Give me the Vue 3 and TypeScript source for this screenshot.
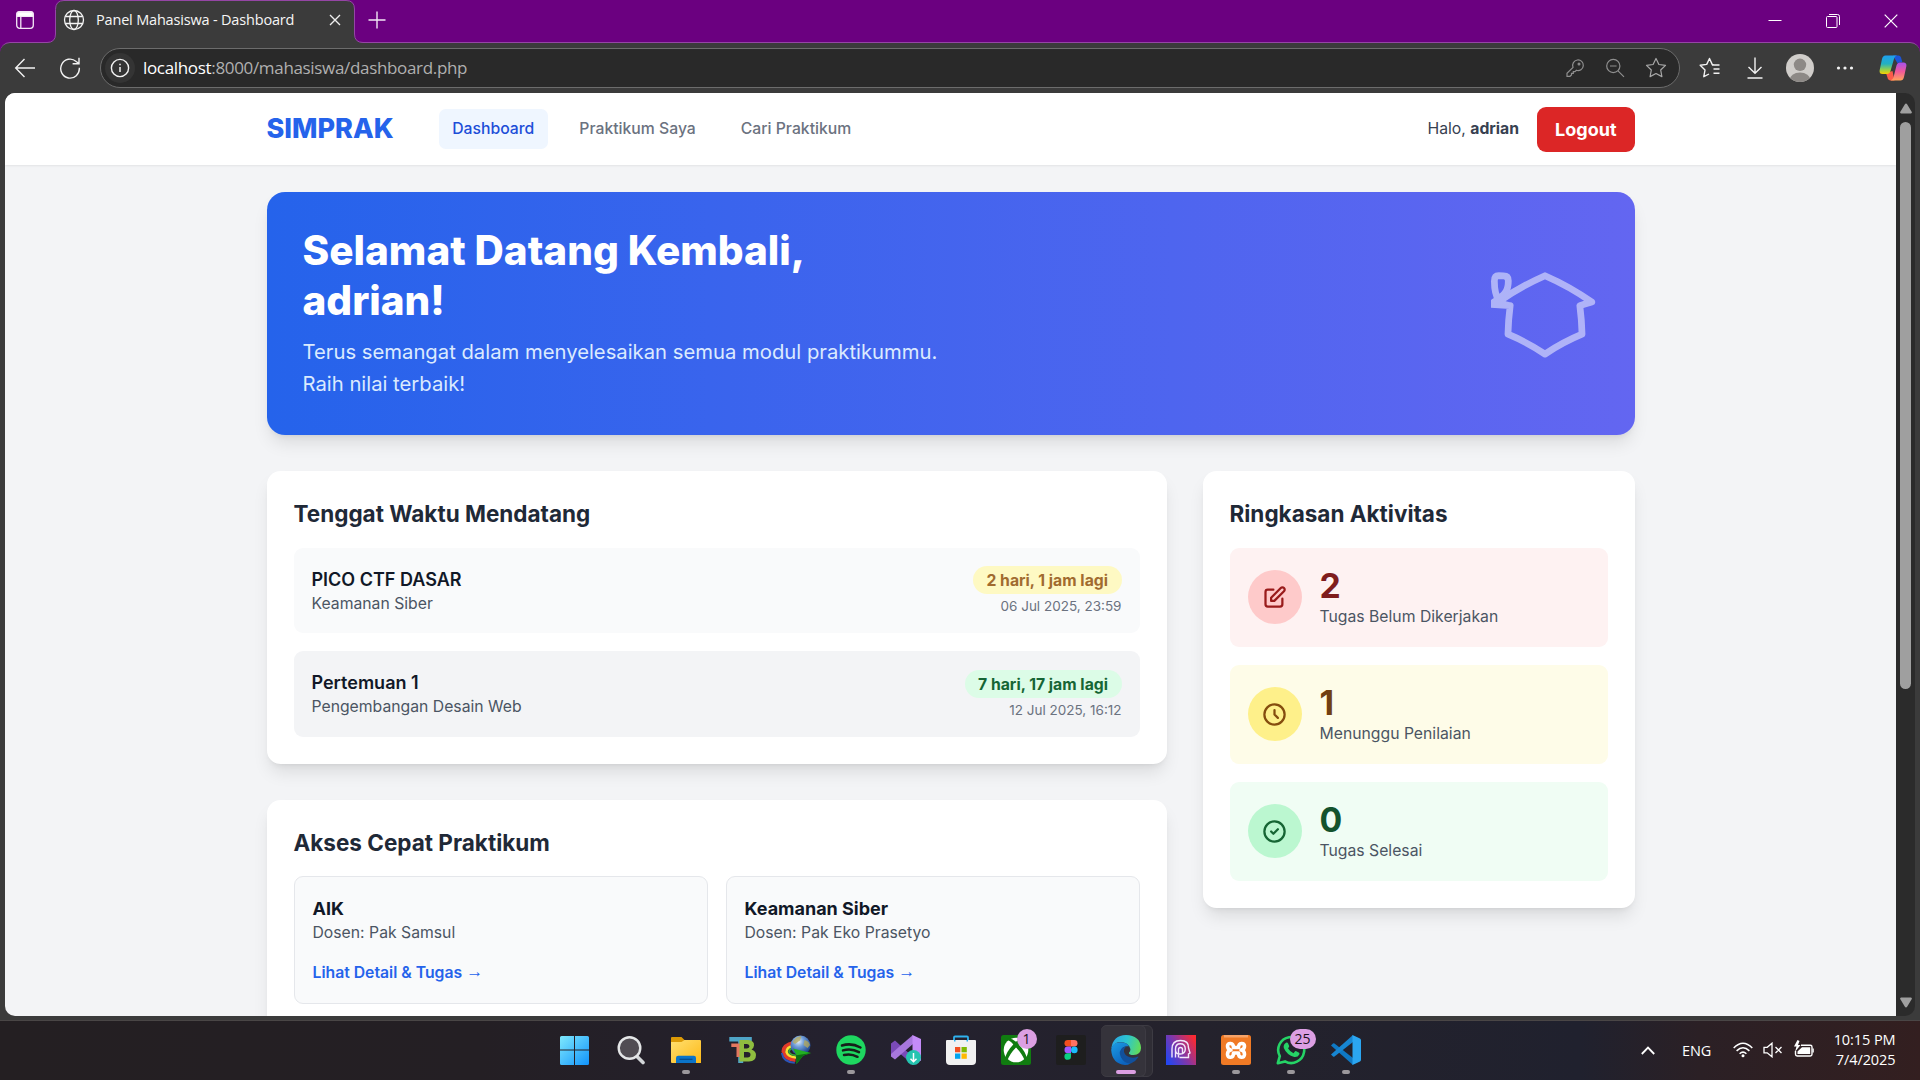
<script setup lang="ts">
interface Deadline {
  title: string
  course: string
  left: string
  due: string
  tone: 'soon' | 'later'
}
interface Stat {
  count: number
  label: string
  tone: 'red' | 'yellow' | 'green'
  path: string
}
interface Course {
  name: string
  lecturer: string
}

const navLinks: string[] = ['Dashboard', 'Praktikum Saya', 'Cari Praktikum']

const deadlines: Deadline[] = [
  { title: 'PICO CTF DASAR', course: 'Keamanan Siber', left: '2 hari, 1 jam lagi', due: '06 Jul 2025, 23:59', tone: 'soon' },
  { title: 'Pertemuan 1', course: 'Pengembangan Desain Web', left: '7 hari, 17 jam lagi', due: '12 Jul 2025, 16:12', tone: 'later' },
]

const courses: Course[] = [
  { name: 'AIK', lecturer: 'Pak Samsul' },
  { name: 'Keamanan Siber', lecturer: 'Pak Eko Prasetyo' },
]

const stats: Stat[] = [
  {
    count: 2,
    label: 'Tugas Belum Dikerjakan',
    tone: 'red',
    path: 'M11 5H6a2 2 0 00-2 2v11a2 2 0 002 2h11a2 2 0 002-2v-5m-1.414-9.414a2 2 0 112.828 2.828L11.828 15H9v-2.828l8.586-8.586z',
  },
  { count: 1, label: 'Menunggu Penilaian', tone: 'yellow', path: 'M12 8v4l3 3m6-3a9 9 0 11-18 0 9 9 0 0118 0z' },
  { count: 0, label: 'Tugas Selesai', tone: 'green', path: 'M9 12l2 2 4-4m6 2a9 9 0 11-18 0 9 9 0 0118 0z' },
]
</script>

<template>
  <div class="desktop">
    <div class="browser">
      <div class="tabstrip">
        <div class="tab-actions">
          <svg width="20" height="20" viewBox="0 0 20 20" fill="none" stroke="#f3e6f5" stroke-width="1.3">
            <rect x="1.7" y="1.7" width="16.6" height="16.6" rx="3" />
            <path d="M2 3.5Q2 2 4 2h12q2 0 2 1.500V6.300H2z" fill="#fff" />
            <path d="M5.800 6v12" />
          </svg>
        </div>
        <div class="tab">
          <svg class="tab-shape" width="318" height="44" viewBox="0 0 318 44">
            <path d="M0 42.500H1Q9.500 42.500 9.500 34V9.500Q9.500 .5 18 .5H300Q308.500 .5 308.500 9V34Q308.500 42.500 317 42.500H318V44H0Z" fill="#3b3b3b" />
            <path d="M0 42.500H1Q9.500 42.500 9.500 34V9.500Q9.500 .5 18 .5H300Q308.500 .5 308.500 9V34Q308.500 42.500 317 42.500H318" fill="none" stroke="#9546a5" />
          </svg>
          <svg class="globe" width="22" height="22" viewBox="0 0 22 22" fill="none" stroke="#f4f4f4" stroke-width="1.3">
            <circle cx="11" cy="11" r="9.500" />
            <ellipse cx="11" cy="11" rx="4.300" ry="9.500" />
            <path d="M2.300 7.500h17.400M2.300 14.500h17.400" />
          </svg>
          <span class="tab-title">Panel Mahasiswa - Dashboard</span>
          <svg class="tab-close" width="12" height="12" viewBox="0 0 12 12" stroke="#eee" stroke-width="1.4">
            <path d="M1 1l10 10M11 1L1 11" />
          </svg>
        </div>
        <svg class="plus" width="18" height="18" viewBox="0 0 18 18" stroke="#f3e6f5" stroke-width="1.4">
          <path d="M9 .5v17M.5 9h17" />
        </svg>
        <div class="window-buttons">
          <svg width="14" height="14" viewBox="0 0 14 14" stroke="#fff" fill="none"><path d="M.5 6.500h13" /></svg>
          <svg width="14" height="14" viewBox="0 0 14 14" stroke="#fff" fill="none">
            <rect x=".5" y="2.500" width="10.500" height="11" rx="1" />
            <path d="M3 .5h8.500q2 0 2 2V11" />
          </svg>
          <svg width="14" height="14" viewBox="0 0 14 14" stroke="#fff" fill="none" stroke-width="1.2"><path d="M.7 .7l12.600 12.600M13.300 .7L.7 13.300" /></svg>
        </div>
      </div>

      <div class="toolbar">
        <svg class="back" width="22" height="22" viewBox="0 0 22 22" fill="none" stroke="#f2f2f2" stroke-width="1.4">
          <path d="M21 11H2M10.500 2L1.700 11l8.800 9" />
        </svg>
        <svg class="reload" width="22" height="22" viewBox="0 0 22 22" fill="none" stroke="#f2f2f2" stroke-width="1.4">
          <path d="M20.300 10.800A9.300 9.500 0 1 1 17.200 4.500L19.800 6.500M20 .8v5.900h-6.400" />
        </svg>
        <div class="address">
          <span class="site-info">
            <svg width="20" height="20" viewBox="0 0 20 20" fill="none" stroke="#f2f2f2" stroke-width="1.4">
              <circle cx="10" cy="10" r="8.600" />
              <path d="M10 9v5M10 5.700v1.600" stroke-width="1.500" />
            </svg>
          </span>
          <span class="url"><b>localhost</b>:8000/mahasiswa/dashboard.php</span>
          <span class="address-icons">
            <svg width="20" height="20" viewBox="0 0 20 20" fill="none" stroke="#8f8f8f" stroke-width="1.200">
              <path d="M12.300 2a5.300 5.300 0 1 1-.9 10.300L10 13.600H8.300v1.700H6.500V17L5 18.300H2v-3l6-6A5.400 5.400 0 0 1 12.300 2z" />
              <circle cx="14" cy="6" r=".9" />
            </svg>
            <svg width="20" height="20" viewBox="0 0 20 20" fill="none" stroke="#8f8f8f" stroke-width="1.200">
              <circle cx="8.300" cy="8" r="6.600" />
              <path d="M13 12.800l6 6M5 8h6.600" />
            </svg>
            <svg width="22" height="22" viewBox="0 0 22 22" fill="none" stroke="#a8a8a8" stroke-width="1.200" stroke-linejoin="round">
              <path d="M11 1.500l2.900 6 6.600.9-4.800 4.600 1.200 6.600-5.900-3.100-5.900 3.100L6.300 13 1.500 8.400l6.600-.9z" />
            </svg>
          </span>
        </div>
        <div class="toolbar-right">
          <svg width="22" height="22" viewBox="0 0 22 22" fill="none" stroke="#f2f2f2" stroke-width="1.400" stroke-linejoin="round">
            <path d="M14.500 7.800l-1.200-.2L10.500 1.500 7.700 7.400 1.200 8.300 6 13l-1.200 6.700 5.200-2.700M13 8h7.500M14.500 12h6M14.500 16.200h6" />
          </svg>
          <svg width="22" height="22" viewBox="0 0 22 22" fill="none" stroke="#f2f2f2" stroke-width="1.400">
            <path d="M11 .5v15.500M4.500 10l6.500 6.300 6.500-6.300M3.500 21h15" />
          </svg>
          <svg width="28" height="28" viewBox="0 0 28 28">
            <defs><clipPath id="avatar"><circle cx="14" cy="14" r="14" /></clipPath></defs>
            <g clip-path="url(#avatar)">
              <rect width="28" height="28" fill="#d0cdca" />
              <circle cx="14" cy="10.800" r="6.200" fill="#8d8986" />
              <ellipse cx="14" cy="26.500" rx="10.500" ry="8" fill="#8d8986" />
            </g>
          </svg>
          <svg width="18" height="6" viewBox="0 0 18 6" fill="#f2f2f2"><circle cx="2.500" cy="3" r="1.600" /><circle cx="9" cy="3" r="1.600" /><circle cx="15.500" cy="3" r="1.600" /></svg>
          <svg width="28" height="28" viewBox="0 0 28 28">
            <defs>
              <linearGradient id="cpA" x1="0" y1="0" x2="0" y2="1"><stop offset="0" stop-color="#1ea0f0" /><stop offset=".45" stop-color="#23b0c0" /><stop offset=".75" stop-color="#8fcf50" /><stop offset="1" stop-color="#f7d000" /></linearGradient>
              <linearGradient id="cpB" x1="0" y1="0" x2="0" y2="1"><stop offset="0" stop-color="#a651ee" /><stop offset=".5" stop-color="#f0589a" /><stop offset="1" stop-color="#ffa35a" /></linearGradient>
            </defs>
            <path d="M14 1.500h5.500q1.800 0 2.500 2l1.300 4.500-5 1z" fill="#1c55d8" />
            <path d="M7 19l6.500-2 2 9.500h-4q-2 0-2.700-2z" fill="#fb5b4a" />
            <path d="M6.500 1.500h11.500q-2.300.5-3 3.200L11.500 17q-.9 3-3.500 3H3.500Q.2 20 .6 16.500L3 5q.8-3.500 3.500-3.500z" fill="url(#cpA)" />
            <path d="M21.500 26.500H11.500q2.300-.5 3-3.200L17.500 11.500Q18.400 8.500 21 8.500h3.500q3.300 0 2.900 3.500L25 23q-.8 3.500-3.500 3.500z" fill="url(#cpB)" />
          </svg>
        </div>
      </div>

      <div class="content">
        <div class="page">
          <header class="site-header">
            <div class="container nav">
              <span class="brand">SIMPRAK</span>
              <nav class="links">
                <a v-for="(link, i) in navLinks" :key="link" class="link" :class="{ active: i === 0 }">{{ link }}</a>
              </nav>
              <span class="hello">Halo, <strong>adrian</strong></span>
              <a class="logout">Logout</a>
            </div>
          </header>

          <main class="container main">
            <section class="hero">
              <div class="hero-text">
                <h1>Selamat Datang Kembali,<br />adrian!</h1>
                <p>Terus semangat dalam menyelesaikan semua modul praktikummu.<br />Raih nilai terbaik!</p>
              </div>
              <svg class="hero-icon" viewBox="0 0 24 24" fill="none" stroke="#fff" stroke-width="1.5" stroke-linecap="round" stroke-linejoin="round">
                <path d="M-.5 9.850L4.260 10.147a60.440 60.440 0 0 0-.491 6.347A48.620 48.620 0 0 1 12 20.904a48.620 48.620 0 0 1 8.232-4.410 60.460 60.460 0 0 0-.491-6.347c.875-.294 1.762-.566 2.658-.814A59.900 59.900 0 0 0 12 3.493 59.900 59.900 0 0 0 1.800 9.200C.9 7.700.75 6 .75 4.700.75 3.800 1.100 3.500 1.700 3.500H2.800C3.500 3.500 3.850 3.900 3.850 4.600 3.850 6.500 3.500 7.500 .7 9.300L4.260 10.147" />
              </svg>
            </section>

            <div class="grid">
              <div class="column">
                <section class="card">
                  <h3>Tenggat Waktu Mendatang</h3>
                  <div class="stack">
                    <div v-for="d in deadlines" :key="d.title" class="deadline" :class="d.tone">
                      <div>
                        <p class="item-title">{{ d.title }}</p>
                        <p class="item-sub">{{ d.course }}</p>
                      </div>
                      <div class="when">
                        <span class="badge">{{ d.left }}</span>
                        <p class="due">{{ d.due }}</p>
                      </div>
                    </div>
                  </div>
                </section>

                <section class="card">
                  <h3>Akses Cepat Praktikum</h3>
                  <div class="courses">
                    <div v-for="c in courses" :key="c.name" class="course">
                      <p class="item-title">{{ c.name }}</p>
                      <p class="item-sub">Dosen: {{ c.lecturer }}</p>
                      <a class="detail">Lihat Detail &amp; Tugas <span class="arrow">→</span></a>
                    </div>
                  </div>
                </section>
              </div>

              <section class="card summary">
                <h3>Ringkasan Aktivitas</h3>
                <div class="stack">
                  <div v-for="s in stats" :key="s.label" class="stat" :class="s.tone">
                    <span class="stat-icon">
                      <svg viewBox="0 0 24 24" fill="none" stroke="currentColor" stroke-width="2" stroke-linecap="round" stroke-linejoin="round"><path :d="s.path" /></svg>
                    </span>
                    <div>
                      <p class="count">{{ s.count }}</p>
                      <p class="item-sub">{{ s.label }}</p>
                    </div>
                  </div>
                </div>
              </section>
            </div>
          </main>
        </div>
        <div class="scrollbar">
          <svg width="14" height="11" viewBox="0 0 14 11" fill="#9f9f9f"><path d="M7 .5q.7 0 1.100.7l4.700 7.800q.5 1.300-.9 1.500H2.100Q.7 10.300 1.200 9L5.900 1.200Q6.300.5 7 .5z" /></svg>
          <div class="thumb"></div>
          <svg width="14" height="11" viewBox="0 0 14 11" fill="#9f9f9f"><path d="M7 10.500q-.7 0-1.100-.7L1.200 2Q.7.7 2.100.5h9.800q1.400.2.900 1.500L8.100 9.800q-.4.7-1.100.7z" /></svg>
        </div>
      </div>
    </div>

    <div class="taskbar">
      <div class="apps">
        <div class="app">
          <svg class="start" width="30" height="30" viewBox="0 0 30 30">
            <defs><linearGradient id="win" x1="0" y1="0" x2="1" y2="1"><stop offset="0" stop-color="#7fe9fd" /><stop offset="1" stop-color="#1193fb" /></linearGradient></defs>
            <path d="M1.500 1H14V14.500H0V2.500Q0 1 1.500 1zM15 1h12.500Q29 1 29 2.500V14.500H15zM0 15.500H14V30H1.500Q0 30 0 28.500zM15 15.500h14v13Q29 30 27.500 30H15z" fill="url(#win)" />
          </svg>
        </div>
        <div class="app">
          <svg width="30" height="30" viewBox="0 0 30 30">
            <path d="M21 21.500l6 6" stroke="#d3d6d8" stroke-width="3.600" stroke-linecap="round" />
            <circle cx="13.500" cy="13" r="10.800" fill="#514d53" stroke="#e4e6e7" stroke-width="2.400" />
          </svg>
        </div>
        <div class="app">
          <svg width="30" height="30" viewBox="0 0 30 30">
            <defs><linearGradient id="fold" x1="0" y1="0" x2="1" y2="1"><stop offset="0" stop-color="#ffdf70" /><stop offset="1" stop-color="#fdb916" /></linearGradient></defs>
            <path d="M0 3q0-1 1-1h9.500l3 3H20v8H0z" fill="#dc9a06" />
            <path d="M0 7h10.500l3-2H29q1 0 1 1v22H1q-1 0-1-1z" fill="url(#fold)" />
            <path d="M5 28v-5q0-2.200 2.200-2.200h15.600q2.200 0 2.200 2.200v5z" fill="#0b74c9" />
            <path d="M8.500 24.300h13" stroke="#064a8b" stroke-width="1.200" />
          </svg>
          <i class="dot"></i>
        </div>
        <div class="app">
          <svg width="30" height="30" viewBox="0 0 30 30">
            <path d="M3.300 2h22.500v4.500h-8.600V28h-5V6.500H3.300z" fill="#4fa5c7" />
            <path d="M5.300 8.500H14V22h-3.500v-10H5.300z" fill="#e4775f" />
            <path fill-rule="evenodd" d="M13.500 5h8.500q6.500.5 6 5.500-.3 3-2.500 4 4.500 1.500 4.500 5.500 0 6-7 6.500h-9.500zM18 9v4.500h3q2.500-.3 2.500-2.300T21 9zM18 17v5.500h3.500q3-.3 3-2.800T21.500 17z" fill="#8fbd3f" />
          </svg>
        </div>
        <div class="app">
          <svg width="32" height="30" viewBox="0 0 32 30">
            <defs><radialGradient id="earth" cx=".4" cy=".3" r=".7"><stop offset="0" stop-color="#e5eff8" /><stop offset=".4" stop-color="#6d9bd8" /><stop offset="1" stop-color="#173e86" /></radialGradient></defs>
            <path d="M14 8Q3.500 10 3.500 16.500q1 7.500 12 8.500" fill="none" stroke="#e13a2a" stroke-width="4" />
            <path d="M14 10.500Q6.500 12 6.500 17q1.500 5 9.500 5.500" fill="none" stroke="#f6e033" stroke-width="2.600" />
            <path d="M15 12.500Q9 13.500 9 17q1.200 3 7 3.500" fill="none" stroke="#37a63a" stroke-width="1.800" />
            <path d="M1.800 18q1.500 9.500 13 9.800" fill="none" stroke="#2c54b8" stroke-width="1.800" />
            <circle cx="20.500" cy="10.500" r="10" fill="url(#earth)" />
            <path d="M12.500 7q3.500-6 9-6l-1.500 4.500-5 3.500zM24.500 5q4.500 1 5.500 5l-2.500 3-4-3z" fill="#b5a95a" opacity=".75" />
            <path d="M13 13.500l18 4.500-8 2.800-6.500 8.200v-8.700z" fill="#22b022" />
            <path d="M16.500 20.300L31 18l-8 2.800-6.500 8.200z" fill="#0c6f10" />
          </svg>
        </div>
        <div class="app">
          <svg width="30" height="30" viewBox="0 0 30 30">
            <circle cx="15" cy="15" r="14.700" fill="#1ed760" />
            <path d="M6 10.500q9.500-3 18.500 2M7 15.400q8.500-2.400 16 1.800M8 20q7-1.800 13.500 1.800" fill="none" stroke="#16201a" stroke-linecap="round" stroke-width="2.500" />
          </svg>
          <i class="dot"></i>
        </div>
        <div class="app">
          <svg width="30" height="30" viewBox="0 0 30 30">
            <path d="M0 8.500L4 5.500 22 22v8L5.500 15.500V19L0 21.500z" fill="#7a4ab8" />
            <path d="M0 21.500l4 3L22 9V0L9 11 0 19z" fill="#a777dd" />
            <path d="M21.500 0L30 4v21.500L21.500 30z" fill="#c48bf8" />
            <circle cx="22.500" cy="22.500" r="7.500" fill="#25c4b0" />
            <path d="M22.500 18v8.500M19.500 23.700l3 3 3-3" fill="none" stroke="#fff" stroke-width="1.500" />
          </svg>
        </div>
        <div class="app">
          <svg width="30" height="30" viewBox="0 0 30 30">
            <path d="M8 7V2.500q0-1 1-1h12q1 0 1 1V7" fill="none" stroke="#2fb2ee" stroke-width="1.800" />
            <path d="M1 5h28q1 0 1 1v20q0 4-4 4H4q-4 0-4-4V6q0-1 1-1z" fill="#f1f1f1" />
            <path d="M8 6.500V5h1.500v1.500zM20.500 6.500V5H22v1.500z" fill="#2fb2ee" />
            <path d="M9 12h5.300v5.300H9z" fill="#f25022" /><path d="M15.500 12h5.300v5.300h-5.300z" fill="#7fba00" />
            <path d="M9 18.500h5.300v5.300H9z" fill="#00a4ef" /><path d="M15.500 18.500h5.300v5.300h-5.300z" fill="#ffb900" />
          </svg>
        </div>
        <div class="app">
          <svg width="30" height="30" viewBox="0 0 30 30">
            <rect width="30" height="30" rx="2.500" fill="#107c10" />
            <circle cx="15" cy="15" r="12.300" fill="#fff" />
            <path d="M7 3.500q4-.3 8 3.300 4-3.600 8-3.300l1 1.500q-3.500.5-6.300 4.500Q25 17 26 24l-2 2Q21 18.500 15 12.500 9 18.500 6 26l-2-2Q5 17 12.300 9.500 9.500 5.500 6 5z" fill="#107c10" />
          </svg>
          <span class="count-badge">1</span>
        </div>
        <div class="app">
          <svg width="30" height="30" viewBox="0 0 30 30">
            <rect width="30" height="30" rx="2" fill="#1e1e1e" />
            <path d="M15 5h-3.200a3.300 3.300 0 0 0 0 6.600H15z" fill="#f24e1e" />
            <path d="M15 5h3.200a3.300 3.300 0 0 1 0 6.600H15z" fill="#ff7262" />
            <path d="M15 11.600h-3.200a3.300 3.300 0 0 0 0 6.600H15z" fill="#a259ff" />
            <circle cx="18.300" cy="14.900" r="3.300" fill="#1abcfe" />
            <path d="M15 18.200h-3.200a3.300 3.300 0 1 0 3.200 3.300z" fill="#0acf83" />
          </svg>
        </div>
        <div class="app current">
          <svg width="30" height="30" viewBox="0 0 30 30">
            <defs>
              <linearGradient id="edA" x1="0" y1=".3" x2="1" y2=".5"><stop offset="0" stop-color="#2aa5e4" /><stop offset=".5" stop-color="#2cc5d0" /><stop offset="1" stop-color="#62dc5a" /></linearGradient>
              <linearGradient id="edB" x1="0" y1="0" x2=".6" y2="1"><stop offset="0" stop-color="#1c9de4" /><stop offset="1" stop-color="#0c62bd" /></linearGradient>
            </defs>
            <path d="M.3 13.500Q2 .3 15 0q14 .5 15 12.500.2 7-7.500 7.500-5 0-4.500-2.200 1.800-1.800 1.300-4Q17.500 7 9 7 3 7.500.3 13.500z" fill="url(#edA)" />
            <path d="M.2 15Q1 7.500 9 7.300q7 .2 9 4-6-1-8 4Q8 25 19.500 28.500 17 30 14 30 1 28.500.2 15z" fill="url(#edB)" />
            <path d="M12 12.200Q7 16 9.800 22q3.700 7 10 6.500 5-2 7.500-6.200.3-1-.8-.6Q21 24 16 21q-3.500-2.500-3-6 0-1.500 2-3.300z" fill="#11509c" />
          </svg>
          <i class="bar"></i>
        </div>
        <div class="app">
          <svg width="30" height="30" viewBox="0 0 30 30">
            <defs><linearGradient id="pn" x1="0" y1=".8" x2="1" y2=".2"><stop offset="0" stop-color="#2546f0" /><stop offset=".5" stop-color="#8636a4" /><stop offset="1" stop-color="#fb2a32" /></linearGradient></defs>
            <rect width="30" height="30" fill="url(#pn)" />
            <path d="M6 22.500V14Q6 5.500 14.500 5.500T22.500 13l1.500 5-1.500.8v3.700H13.500M9.500 22.500V14Q9.500 8.800 14.300 8.800t5 4.900-5 5.300-4.800-5M12.500 22.500V14.500q0-2 2-2t2 2v4" fill="none" stroke="#f2e9fb" stroke-width="1.400" />
          </svg>
        </div>
        <div class="app">
          <svg width="30" height="30" viewBox="0 0 30 30">
            <rect width="30" height="30" rx="2.500" fill="#f07a25" /><rect x="3" width="24" height="2.500" fill="#f6a368" />
            <path d="M9.500 8.500Q6.500 8.300 6.500 11q0 3.500 3.500 4-3.500.5-3.500 4.300 0 3.200 3.200 2.900 3-.3 2.800-4.200h5q-.2 3.900 2.800 4.200 3.200.3 3.200-2.900 0-3.800-3.500-4.300 3.500-.5 3.500-4 0-2.700-3-2.500-3 .3-3 4h-5q0-3.700-3-4z" fill="none" stroke="#fff" stroke-width="3.600" stroke-linejoin="round" />
          </svg>
          <i class="dot"></i>
        </div>
        <div class="app">
          <svg width="30" height="30" viewBox="0 0 30 30">
            <path d="M1.800 28.200l2-7A13 13 0 1 1 9 26.400z" fill="none" stroke="#25d366" stroke-width="2.600" stroke-linejoin="round" />
            <path d="M10.500 7.500q1-.3 1.500.7l1.200 2.700q.2.900-1.200 2.300 2 3.600 5.500 5l1.600-1.900q.5-.5 1.200-.1l2.800 1.500q.7.500.2 1.700-1.500 3-5 2.600-7.500-2-10.500-9Q7 9.200 10.500 7.500z" fill="#25d366" />
          </svg>
          <span class="count-badge wide">25</span>
          <i class="dot"></i>
        </div>
        <div class="app">
          <svg width="30" height="30" viewBox="0 0 30 30">
            <path d="M0 10.500l2-2q.7-.5 1.500 0L22 23V30z" fill="#0f79c4" />
            <path d="M0 19.500l2 2q.7.500 1.500 0L22 7V0z" fill="#1786d2" />
            <path d="M21.500 0L28.500 3.300q1.500.7 1.500 2V24.700q0 1.300-1.500 2L21.500 30z" fill="#2ba6f1" />
          </svg>
          <i class="dot"></i>
        </div>
      </div>
      <div class="tray">
        <svg width="14" height="9" viewBox="0 0 14 9" fill="none" stroke="#fff" stroke-width="1.800"><path d="M.8 8L7 1.600 13.200 8" /></svg>
        <span class="lang">ENG</span>
        <svg class="wifi" width="20" height="16" viewBox="0 0 20 16" fill="none" stroke="#fff" stroke-width="1.500">
          <path d="M.7 6Q10-3.500 19.300 6M3.600 8.900q6.400-6.400 12.800 0M6.600 11.700q3.400-3.200 6.800 0" /><circle cx="10" cy="13.700" r="1.500" fill="#fff" stroke="none" />
        </svg>
        <svg class="sound" width="20" height="16" viewBox="0 0 20 16" fill="none" stroke="#fff" stroke-width="1.300">
          <path d="M1 5.300h3.200L9 1.200v13.600l-4.800-4H1zM12.500 5l6 6M18.500 5l-6 6" />
        </svg>
        <svg class="battery" width="22" height="18" viewBox="0 0 22 18">
          <path d="M8 5.300h9.300q1.700 0 1.700 1.700v7.300q0 1.700-1.700 1.700H4.200Q2.500 16 2.500 14.300V11" fill="none" stroke="#fff" stroke-width="1.400" />
          <path d="M9 7.200h8.200v6.900H4.500v-2.500z" fill="#fff" /><path d="M19.500 8.500h1.300v4h-1.300zM4.500 0L1 6.500h2.500L2 12l5.500-7H5L6.500 1z" fill="#fff" />
        </svg>
        <div class="clock"><span>10:15 PM</span><span>7/4/2025</span></div>
      </div>
    </div>
  </div>
</template>

<style>
html {
  font-size: 18px;
}
body {
  margin: 0;
  overflow: hidden;
}
</style>

<style scoped>
* {
  box-sizing: border-box;
}
svg {
  display: block;
  flex: none;
}
p,
h1,
h3 {
  margin: 0;
}
.desktop {
  width: 1920px;
  height: 1080px;
  overflow: hidden;
  display: flex;
  flex-direction: column;
  font-family: 'Open Sans', 'Noto Sans', sans-serif;
}
.browser {
  height: 1020px;
  display: flex;
  flex-direction: column;
  background: #6b0080;
}
.tabstrip {
  height: 42px;
  display: flex;
  align-items: center;
  flex: none;
}
.tab-actions {
  width: 55px;
  padding: 0 0 2px 15px;
}
.tab {
  position: relative;
  z-index: 1;
  width: 300px;
  height: 42px;
  display: flex;
  align-items: center;
  padding: 0 14px 2px 8px;
}
.tab-shape {
  position: absolute;
  left: -9px;
  top: 0;
}
.globe,
.tab-title,
.tab-close {
  position: relative;
}
.tab-title {
  flex: 1;
  margin-left: 11px;
  padding-bottom: 2px;
  font-size: 14.500px;
  letter-spacing: -0.180px;
  color: #f6f6f6;
  white-space: nowrap;
}
.plus {
  margin: 0 0 3px 13px;
}
.window-buttons {
  margin-left: auto;
  display: flex;
  gap: 44px;
  padding-right: 22px;
}
.toolbar {
  height: 51px;
  flex: none;
  display: flex;
  align-items: center;
  background: #3b3b3b;
  border-top: 1px solid #9546a5;
  border-radius: 10px 10px 0 0;
  padding-left: 14px;
}
.reload {
  margin-left: 23px;
}
.address {
  width: 1580px;
  height: 40px;
  margin-left: 19px;
  border: 1px solid #6c6c6c;
  border-radius: 20px;
  background: #292929;
  display: flex;
  align-items: center;
  padding: 0 12px 0 4px;
}
.site-info {
  width: 30px;
  height: 30px;
  border-radius: 50%;
  background: #343434;
  display: grid;
  place-items: center;
}
.url {
  margin-left: 8px;
  padding-bottom: 2px;
  font-size: 17px;
  letter-spacing: -0.330px;
  color: #b0b0b0;
}
.url b {
  font-weight: 400;
  color: #fff;
}
.address-icons {
  margin-left: auto;
  display: flex;
  align-items: center;
  gap: 20px;
}
.toolbar-right {
  display: flex;
  align-items: center;
  padding-left: 19px;
}
.toolbar-right svg + svg {
  margin-left: 23px;
}
.toolbar-right svg:nth-child(3) {
  margin-left: 20px;
}
.toolbar-right svg:nth-child(4) {
  margin-left: 22px;
}
.toolbar-right svg:nth-child(5) {
  margin-left: 25px;
}
.content {
  flex: 1;
  min-height: 0;
  display: flex;
  background: #3b3b3b;
  padding: 0 5px 4px;
}
.page {
  width: 1891px;
  height: 923px;
  overflow: hidden;
  background: #f3f4f6;
  border-radius: 10px 0 0 10px;
  font-family: Inter, 'Liberation Sans', sans-serif;
  font-size: 1rem;
  line-height: 1.5;
}
.scrollbar {
  width: 19px;
  background: #2b2b2b;
  border-radius: 0 10px 10px 0;
  display: flex;
  flex-direction: column;
  align-items: center;
  padding: 10px 0 8px;
}
.thumb {
  width: 11px;
  height: 567px;
  margin: 8px 0 auto;
  border-radius: 6px;
  background: #9f9f9f;
}
.container {
  width: 76rem;
  margin: 0 auto;
}
.site-header {
  background: #fff;
  box-shadow: 0 1px 2px rgba(0, 0, 0, 0.07);
}
.nav {
  height: 4rem;
  display: flex;
  align-items: center;
}
.brand {
  font-size: 1.5rem;
  font-weight: 800;
  line-height: 2rem;
  color: #2563eb;
}
.links {
  display: flex;
  gap: 1rem;
  margin-left: 2.5rem;
}
.link {
  padding: 0.5rem 0.75rem;
  border-radius: 0.375rem;
  font-size: 0.875rem;
  line-height: 1.25rem;
  font-weight: 500;
  color: #6b7280;
}
.link.active {
  background: #eff6ff;
  color: #1d4ed8;
}
.hello {
  margin-left: auto;
  font-size: 0.875rem;
  color: #374151;
}
.hello strong {
  font-weight: 700;
}
.logout {
  margin-left: 1rem;
  padding: 0.5rem 1rem;
  border-radius: 0.5rem;
  background: #dc2626;
  color: #fff;
  font-weight: 700;
}
.main {
  padding-top: 1.5rem;
}
.hero {
  height: 13.5rem;
  padding: 2rem;
  display: flex;
  align-items: center;
  justify-content: space-between;
  border-radius: 1rem;
  background: linear-gradient(to right, #2563eb, #6366f1);
  box-shadow: 0 0.625rem 0.9375rem -0.1875rem rgba(0, 0, 0, 0.1), 0 0.25rem 0.375rem -0.25rem rgba(0, 0, 0, 0.1);
  color: #fff;
}
.hero-text {
  align-self: flex-start;
  margin-top: -2px;
}
.hero h1 {
  font-size: 2.25rem;
  line-height: 50px;
  font-weight: 800;
}
.hero p {
  margin-top: 10px;
  font-size: 1.125rem;
  line-height: 32px;
  color: #dbeafe;
}
.hero-icon {
  width: 6rem;
  height: 6rem;
  opacity: 0.5;
  overflow: hidden;
}
.grid {
  margin-top: 2rem;
  display: grid;
  grid-template-columns: 50rem 24rem;
  gap: 2rem;
  align-items: start;
}
.column {
  display: flex;
  flex-direction: column;
  gap: 2rem;
}
.card {
  padding: 1.5rem;
  background: #fff;
  border-radius: 0.75rem;
  box-shadow: 0 0.625rem 0.9375rem -0.1875rem rgba(0, 0, 0, 0.1), 0 0.25rem 0.375rem -0.25rem rgba(0, 0, 0, 0.1);
}
.card h3 {
  margin-bottom: 1rem;
  font-size: 1.25rem;
  line-height: 1.75rem;
  font-weight: 700;
  color: #1f2937;
}
.stack {
  display: flex;
  flex-direction: column;
  gap: 1rem;
}
.deadline {
  display: flex;
  align-items: center;
  justify-content: space-between;
  padding: 1rem;
  border-radius: 0.5rem;
  background: #f9fafb;
}
.deadline.later {
  background: #f3f4f6;
}
.item-title {
  font-weight: 600;
  color: #111827;
}
.course .item-title {
  font-weight: 700;
}
.item-sub {
  font-size: 0.875rem;
  line-height: 1.25rem;
  color: #4b5563;
}
.when {
  text-align: right;
}
.badge {
  padding: 0.25rem 0.75rem;
  border-radius: 999px;
  font-size: 0.875rem;
  line-height: 1.25rem;
  font-weight: 700;
  background: #fef9c3;
  color: #a16b2f;
}
.later .badge {
  background: #dcfce7;
  color: #166534;
}
.due {
  margin-top: 0.25rem;
  font-size: 0.75rem;
  line-height: 1rem;
  color: #6b7280;
}
.courses {
  display: grid;
  grid-template-columns: 1fr 1fr;
  gap: 1rem;
}
.course {
  padding: 1rem;
  border: 1px solid #e5e7eb;
  border-radius: 0.5rem;
  background: #f9fafb;
}
.detail {
  display: block;
  margin: 17px 0 1px;
  font-size: 0.875rem;
  line-height: 1.25rem;
  font-weight: 600;
  color: #2563eb;
}
.arrow {
  display: inline-block;
  font-family: 'Liberation Sans', sans-serif;
  font-size: 17px;
  font-weight: 400;
  line-height: 1;
  height: 17px;
  transform: translateY(-1.500px);
}
.stat {
  display: flex;
  align-items: center;
  gap: 1rem;
  padding: 1rem;
  border-radius: 0.5rem;
}
.stat-icon {
  width: 3rem;
  height: 3rem;
  border-radius: 50%;
  display: grid;
  place-items: center;
}
.stat-icon svg {
  width: 1.5rem;
  height: 1.5rem;
}
.count {
  font-size: 1.875rem;
  line-height: 2.25rem;
  font-weight: 700;
}
.red {
  background: #fef2f2;
}
.red .stat-icon {
  background: #fecaca;
  color: #991b1b;
}
.red .count {
  color: #7f1d1d;
}
.yellow {
  background: #fefce8;
}
.yellow .stat-icon {
  background: #fef08a;
  color: #854d0e;
}
.yellow .count {
  color: #713f12;
}
.green {
  background: #f0fdf4;
}
.green .stat-icon {
  background: #bbf7d0;
  color: #166534;
}
.green .count {
  color: #14532d;
}
.taskbar {
  height: 60px;
  display: flex;
  justify-content: space-between;
  background: linear-gradient(to right, #241f22 0, #241f24 480px, #24212f 850px, #24222c 1200px, #20212e 1580px, #2b2025 1700px, #331f20 1920px);
  border-top: 1px solid #4a4646;
  color: #fff;
}
.apps {
  display: flex;
  padding-left: 548.5px;
}
.app {
  position: relative;
  width: 55px;
  height: 58px;
  display: grid;
  place-items: center;
}
.app > svg {
  position: relative;
}
.start {
  margin-right: 2px;
}
.dot,
.bar {
  position: absolute;
  bottom: 5px;
  left: 50%;
  width: 8px;
  height: 4px;
  margin-left: -4px;
  border-radius: 2px;
  background: #9b989c;
}
.bar {
  width: 20px;
  margin-left: -10px;
  background: #dc9fe3;
}
.current::before,
.current::after {
  content: '';
  position: absolute;
  top: 4px;
  left: 2.500px;
  width: 50px;
  height: 50px;
  border-radius: 6px;
  background: #2f2d35;
  border: 1px solid #3d3b43;
}
.current::before {
  z-index: 0;
}
.current::after {
  width: 44px;
  background: #35333b;
  border-left: 0;
}
.current > svg,
.current > .bar {
  z-index: 1;
}
.count-badge {
  position: absolute;
  left: 28px;
  top: 8px;
  width: 20px;
  height: 20px;
  border-radius: 10px;
  background: #dc9fe3;
  color: #1b121c;
  font-size: 14px;
  line-height: 20px;
  text-align: center;
}
.count-badge.wide {
  left: 26px;
  width: 26px;
}
.tray {
  height: 58px;
  display: flex;
  align-items: center;
  padding-right: 24.500px;
  font-size: 14.500px;
}
.lang {
  margin-left: 27px;
  font-size: 14.500px;
  letter-spacing: -0.200px;
}
.wifi {
  margin-left: 22px;
}
.sound {
  margin-left: 10px;
}
.battery {
  margin: -2px 0 0 10px;
}
.clock {
  width: 80.500px;
  display: flex;
  flex-direction: column;
  text-align: right;
  line-height: 20px;
  letter-spacing: -0.080px;
}
</style>
